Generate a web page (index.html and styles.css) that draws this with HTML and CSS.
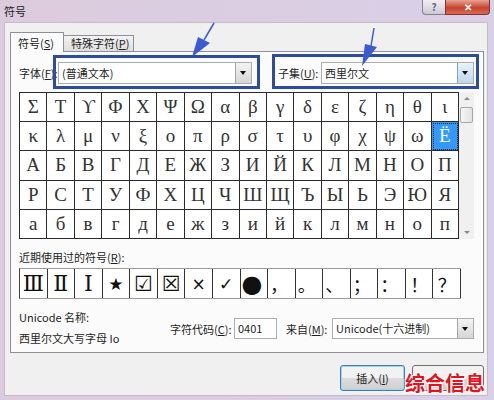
FILE: index.html
```html
<!DOCTYPE html>
<html lang="zh">
<head>
<meta charset="utf-8">
<title>符号</title>
<link rel="stylesheet" href="styles.css">
</head>
<body>
<div class="window">
  <div class="titlebar">
    <span class="title">符号</span>
    <div class="caption-btns">
      <span class="cbtn help">?</span>
      <span class="cbtn close">✕</span>
    </div>
  </div>
  <div class="client">
    <div class="tabs">
      <div class="tab active">符号(<u>S</u>)</div>
      <div class="tab">特殊字符(<u>P</u>)</div>
    </div>
    <div class="panel">
      <div class="font-row">
        <span class="lbl lbl-font">字体(<u>F</u>):</span>
        <div class="select sel-font"><span class="val">(普通文本)</span><span class="dd"></span></div>
        <span class="lbl lbl-subset">子集(<u>U</u>):</span>
        <div class="select sel-subset"><span class="val">西里尔文</span><span class="dd blue"></span></div>
      </div>
      <div class="grid-wrap">
        <div class="grid">
          <span>Σ</span><span>Τ</span><span>ϒ</span><span>Φ</span><span>Χ</span><span>Ψ</span><span>Ω</span><span>α</span><span>β</span><span>γ</span><span>δ</span><span>ε</span><span>ζ</span><span>η</span><span>θ</span><span>ι</span>
          <span>κ</span><span>λ</span><span>μ</span><span>ν</span><span>ξ</span><span>ο</span><span>π</span><span>ρ</span><span>σ</span><span>τ</span><span>υ</span><span>φ</span><span>χ</span><span>ψ</span><span>ω</span><span class="sel">Ё</span>
          <span>А</span><span>Б</span><span>В</span><span>Г</span><span>Д</span><span>Е</span><span>Ж</span><span>З</span><span>И</span><span>Й</span><span>К</span><span>Л</span><span>М</span><span>Н</span><span>О</span><span>П</span>
          <span>Р</span><span>С</span><span>Т</span><span>У</span><span>Ф</span><span>Х</span><span>Ц</span><span>Ч</span><span>Ш</span><span>Щ</span><span>Ъ</span><span>Ы</span><span>Ь</span><span>Э</span><span>Ю</span><span>Я</span>
          <span>а</span><span>б</span><span>в</span><span>г</span><span>д</span><span>е</span><span>ж</span><span>з</span><span>и</span><span>й</span><span>к</span><span>л</span><span>м</span><span>н</span><span>о</span><span>п</span>
        </div>
        <div class="scrollbar">
          <span class="sb-btn up"></span>
          <span class="sb-thumb"></span>
          <span class="sb-fill"></span>
          <span class="sb-btn down"></span>
        </div>
      </div>
      <div class="recent-label">近期使用过的符号(<u>R</u>):</div>
      <div class="recent">
        <span class="roman">Ⅲ</span><span class="roman">Ⅱ</span><span class="roman">Ⅰ</span><span class="sym">★</span><span class="box">☑</span><span class="box">☒</span><span class="sym">×</span><span class="sym">✓</span><span class="dot">●</span><span class="cjk">，</span><span class="cjk">。</span><span class="cjk">、</span><span class="cjk">；</span><span class="cjk">：</span><span class="cjk c">！</span><span class="cjk c">？</span>
      </div>
      <div class="info">
        <div class="names">
          <div>Unicode 名称:</div>
          <div>西里尔文大写字母 Io</div>
        </div>
        <div class="codes">
          <span class="lbl lbl-code">字符代码(<u>C</u>):</span>
          <div class="input">0401</div>
          <span class="lbl lbl-from">来自(<u>M</u>):</span>
          <div class="select sel-from"><span class="val">Unicode(十六进制)</span><span class="dd"></span></div>
        </div>
      </div>
    </div>
    <div class="buttons">
      <div class="btn default">插入(<u>I</u>)</div>
      <div class="btn"></div>
    </div>
  </div>
  <svg class="annot" width="494" height="400" viewBox="0 0 494 400">
    <rect x="54.5" y="56.5" width="204" height="31" fill="none" stroke="#2d4c9e" stroke-width="3"/>
    <rect x="273.5" y="55.5" width="204" height="32" fill="none" stroke="#2d4c9e" stroke-width="3"/>
    <line x1="214" y1="23" x2="204" y2="40" stroke="#3b5bd2" stroke-width="1.5"/>
    <polygon points="198,37 210,43 192,57" fill="#3b5bd2"/>
    <line x1="374" y1="28" x2="371" y2="46" stroke="#3b5bd2" stroke-width="1.5"/>
    <polygon points="365,44 377,47 362,66" fill="#3b5bd2"/>
  </svg>
  <div class="watermark">综合信息</div>
</div>
</body>
</html>
```

FILE: styles.css
```css
html, body {
  margin: 0;
  padding: 0;
}
body {
  width: 494px;
  height: 400px;
  overflow: hidden;
  font-family: "Noto Sans CJK SC", "Noto Sans", sans-serif;
  font-size: 11px;
  color: #1e1e1e;
  background: linear-gradient(to right, #dccbdc, #d9d0e8);
}
u { text-decoration: underline; }

.window {
  position: relative;
  height: 400px;
  display: flex;
  flex-direction: column;
}

/* title bar */
.titlebar {
  height: 22px;
  display: flex;
  justify-content: space-between;
  align-items: flex-start;
  padding: 0 4px 0 4px;
  flex: none;
}
.title {
  line-height: 22px;
  font-size: 11px;
  color: #222;
}
.caption-btns {
  display: flex;
}
.cbtn {
  height: 15px;
  box-sizing: border-box;
  display: flex;
  align-items: center;
  justify-content: center;
  font-size: 10px;
  font-weight: bold;
  line-height: 1;
}
.cbtn.help {
  width: 23px;
  border: 1px solid #84808c;
  border-top: none;
  border-right: none;
  border-radius: 0 0 0 4px;
  background: linear-gradient(#f2eef4, #cfc9d6);
  color: #6b6478;
}
.cbtn.close {
  width: 45px;
  border: 1px solid #7b3630;
  border-top: none;
  border-radius: 0 0 4px 0;
  background: linear-gradient(#e8a294, #c9442e 55%, #d86a56);
  color: #fff;
}

/* client */
.client {
  flex: 1;
  margin: 0 6px 4px 4px;
  background: #f0f0f0;
  border: 1px solid #c3bcc8;
  padding: 9px 3px 0 5px;
  display: flex;
  flex-direction: column;
}

.tabs {
  display: flex;
  align-items: flex-end;
  height: 19px;
  position: relative;
  z-index: 1;
}
.tab {
  box-sizing: border-box;
  height: 16px;
  padding: 0 0 0 7px;
  border: 1px solid #8e9099;
  border-bottom: none;
  border-left: none;
  background: linear-gradient(#f3f3f3, #dedede);
  line-height: 15px;
  width: 70px;
  color: #222;
}
.tab.active {
  height: 20px;
  width: 54px;
  border-left: 1px solid #8e9099;
  background: #fbfbfb;
  line-height: 20px;
  margin-bottom: -1px;
}

.panel {
  box-sizing: border-box;
  width: 474px;
  height: 302px;
  border: 1px solid #8e9099;
  background: #fbfbfb;
  padding: 10px 0 0 8px;
}

.font-row {
  display: flex;
  align-items: center;
  height: 22px;
}
.lbl { white-space: nowrap; }
.lbl-font { width: 39px; }
.lbl-subset { width: 43px; margin-left: 26px; }

.select {
  box-sizing: border-box;
  height: 22px;
  border: 1px solid #abadb3;
  background: #fff;
  display: flex;
  align-items: stretch;
}
.select .val {
  flex: 1;
  padding-left: 3px;
  line-height: 20px;
  white-space: nowrap;
  overflow: hidden;
}
.select .dd {
  width: 15px;
  border-left: 1px solid #a4a8b0;
  background: linear-gradient(#f4f4f4, #d6d6d6);
  position: relative;
}
.select .dd.blue {
  background: linear-gradient(#e8f3fb, #bcd8ee);
  border-left-color: #7aa6cc;
}
.select .dd::after {
  content: "";
  position: absolute;
  left: 4px;
  top: 50%;
  margin-top: -2px;
  border-left: 3.5px solid transparent;
  border-right: 3.5px solid transparent;
  border-top: 4px solid #111;
}
.sel-font { width: 194px; }
.sel-subset { width: 153px; }

/* character grid */
.grid-wrap {
  display: flex;
  margin-top: 8px;
  height: 147px;
}
.grid {
  box-sizing: border-box;
  width: 440px;
  height: 147px;
  border-left: 1px solid #2a2a2a;
  border-top: 1px solid #2a2a2a;
  display: grid;
  grid-template-columns: repeat(16, 1fr);
  grid-template-rows: repeat(5, 1fr);
  background: #fff;
}
.grid span {
  border-right: 1px solid #2a2a2a;
  border-bottom: 1px solid #2a2a2a;
  display: flex;
  align-items: center;
  justify-content: center;
  font-family: "Liberation Serif", "DejaVu Serif", serif;
  font-size: 19px;
  color: #333;
}
.grid span.sel {
  background: #3399ff;
  color: #fff;
  outline: 1px dotted #222;
  outline-offset: -2px;
}

.scrollbar {
  width: 15px;
  height: 147px;
  display: flex;
  flex-direction: column;
  background: #f0f0f0;
}
.sb-btn {
  height: 15px;
  position: relative;
}
.sb-btn::after {
  content: "";
  position: absolute;
  left: 5px;
  border-left: 3px solid transparent;
  border-right: 3px solid transparent;
}
.sb-btn.up::after {
  top: 5px;
  border-bottom: 3px solid #8a8a8a;
}
.sb-btn.down::after {
  bottom: 5px;
  border-top: 3px solid #8a8a8a;
}
.sb-thumb {
  height: 16px;
  margin: 0 1px;
  box-sizing: border-box;
  border: 1px solid #a8a8a8;
  border-radius: 2px;
  background: linear-gradient(to right, #f6f6f6, #e2e2e2);
}
.sb-fill { flex: 1; }

/* recently used */
.recent-label {
  margin-top: 10px;
  line-height: 16px;
}
.recent {
  margin-top: 3px;
  box-sizing: border-box;
  width: 442px;
  height: 31px;
  border-left: 1px solid #444;
  border-top: 1px solid #9a9a9a;
  border-bottom: 1px solid #9a9a9a;
  display: grid;
  grid-template-columns: repeat(16, 1fr);
  background: #fff;
}
.recent span {
  border-right: 1px solid #333;
  display: flex;
  align-items: center;
  justify-content: center;
  color: #111;
}
.recent .roman {
  font-family: "Liberation Serif", "DejaVu Serif", serif;
  font-size: 22px;
}
.recent .sym {
  font-family: "DejaVu Sans", sans-serif;
  font-size: 17px;
}
.recent .box {
  font-family: "DejaVu Sans", sans-serif;
  font-size: 21px;
}
.recent .dot {
  font-family: "DejaVu Sans", sans-serif;
  font-size: 24px;
  justify-content: flex-start;
  padding-left: 1px;
}
.recent .cjk {
  font-family: "Noto Sans CJK SC", sans-serif;
  font-size: 18px;
  justify-content: flex-start;
  padding-left: 2px;
}
.recent .cjk.c {
  justify-content: center;
  padding-left: 0;
}

/* info */
.info {
  margin-top: 10px;
  display: flex;
}
.names {
  width: 151px;
  display: flex;
  flex-direction: column;
  gap: 5px;
  line-height: 16px;
}
.codes {
  display: flex;
  align-items: center;
  margin-top: 9px;
  height: 21px;
}
.lbl-code { width: 64px; }
.lbl-from { width: 46px; margin-left: 9px; }
.input {
  box-sizing: border-box;
  width: 43px;
  height: 21px;
  border: 1px solid #abadb3;
  background: #fff;
  padding-left: 3px;
  line-height: 19px;
}
.sel-from {
  width: 142px;
  height: 21px;
}
.sel-from .val { line-height: 19px; }

/* buttons */
.buttons {
  display: flex;
  justify-content: flex-end;
  gap: 7px;
  margin-top: 12px;
}
.btn {
  box-sizing: border-box;
  height: 26px;
  width: 72px;
  border: 1px solid #707070;
  border-radius: 3px;
  background: linear-gradient(#f2f2f2 50%, #dddddd 50%, #cfcfcf);
  display: flex;
  align-items: center;
  justify-content: center;
  color: #222;
}
.btn.default {
  width: 65px;
  border-color: #3c7fb1;
  box-shadow: inset 0 0 0 1px #9fd5f3;
}

/* overlays */
.annot {
  position: absolute;
  left: 0;
  top: 0;
  pointer-events: none;
}
.watermark {
  position: absolute;
  left: 405px;
  top: 371px;
  font-family: "Noto Sans CJK SC", sans-serif;
  font-weight: bold;
  font-size: 20px;
  line-height: 24px;
  color: #e5121c;
  text-shadow: -1px -1px 0 #fff, 1px -1px 0 #fff, -1px 1px 0 #fff, 1px 1px 0 #fff, 0 0 2px #fff;
}
```
